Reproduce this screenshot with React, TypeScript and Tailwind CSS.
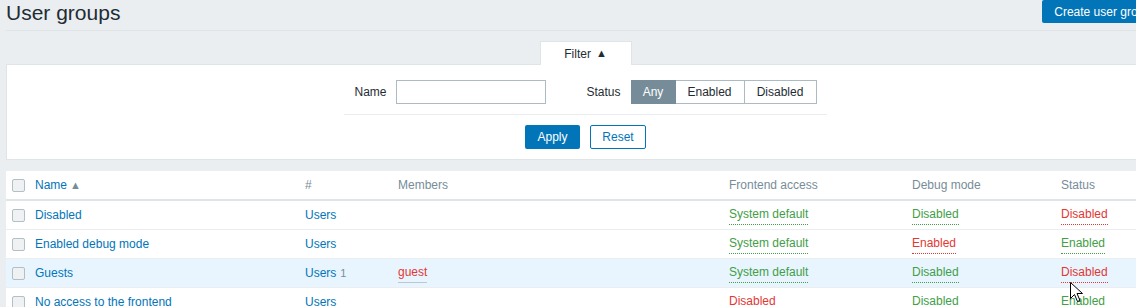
import { ReactNode } from 'react';

const rows = [
  { name: 'Disabled', members: '', count: '', frontend: ['System default', 'green'], debug: ['Disabled', 'green'], status: ['Disabled', 'red'] },
  { name: 'Enabled debug mode', members: '', count: '', frontend: ['System default', 'green'], debug: ['Enabled', 'red'], status: ['Enabled', 'green'] },
  { name: 'Guests', members: 'guest', count: '1', frontend: ['System default', 'green'], debug: ['Disabled', 'green'], status: ['Disabled', 'red'], hover: true },
  { name: 'No access to the frontend', members: '', count: '', frontend: ['Disabled', 'red'], debug: ['Disabled', 'green'], status: ['Enabled', 'green'] },
];

const cols = 'grid grid-cols-[24px_270px_93px_331px_183px_149px_1fr]';

const Checkbox = () => (
  <span className="block w-[13px] h-[13px] rounded-[2px] border border-[#b3bfc7] bg-[#eff1f3]" />
);

const Action = ({ label, tone }: { label: string; tone: string }) => (
  <span
    className={`border-b border-dotted pb-px ${
      tone === 'green' ? 'text-[#429e47] border-[#429e47]' : 'text-[#e33734] border-[#e33734]'
    }`}
  >
    {label}
  </span>
);

const Cell = ({ children, className = '' }: { children?: ReactNode; className?: string }) => (
  <div className={`px-[5px] flex items-center ${className}`}>{children}</div>
);

export default function App() {
  return (
    <div className="w-[1136px] h-[307px] overflow-hidden bg-[#ebeef0] relative font-['Liberation_Sans',Arial,sans-serif] text-[12px] text-[#1f2c33]">
      <div className="w-[1171px] px-[6px]">
        <div className="flex items-start justify-between h-[31px] border-b border-[#dfe4e7]">
          <h1 className="text-[21px] leading-[24px] pt-px text-[#1f2c33]">User groups</h1>
          <button className="h-[23px] px-[12px] mr-[2px] bg-[#0275b8] text-white text-[12px] rounded-[2px] whitespace-nowrap">
            Create user group
          </button>
        </div>

        <div className="flex justify-center mt-[10px]">
          <div className="w-[92px] h-[24px] bg-white border border-b-0 border-[#dfe4e7] flex items-center justify-center gap-[5px] -mb-px relative">
            <span>Filter</span>
            <span className="text-[11px]">▲</span>
          </div>
        </div>

        <div className="bg-white border border-[#dfe4e7] h-[96px] flex flex-col items-center pt-[15px]">
          <div className="flex items-center h-[24px]">
            <span className="mr-[10px]">Name</span>
            <span className="w-[150px] h-[24px] border border-[#acbbc2]" />
            <span className="ml-[40px] mr-[10px]">Status</span>
            <div className="flex h-[24px]">
              <span className="w-[45px] flex items-center justify-center bg-[#768d99] border border-[#768d99] text-white">Any</span>
              <span className="w-[69px] flex items-center justify-center border border-l-0 border-[#acbbc2]">Enabled</span>
              <span className="w-[72px] flex items-center justify-center border border-l-0 border-[#acbbc2]">Disabled</span>
            </div>
          </div>
          <div className="w-[483px] border-t border-[#ebeef0] mt-[10px]" />
          <div className="flex gap-[10px] mt-[10px]">
            <button className="w-[55px] h-[24px] bg-[#0275b8] text-white rounded-[2px]">Apply</button>
            <button className="w-[56px] h-[24px] border border-[#0275b8] text-[#0275b8] rounded-[2px]">Reset</button>
          </div>
        </div>

        <div className="bg-white mt-[11px]">
          <div className={`${cols} h-[30px] border-b-2 border-[#dfe4e7] text-[#768d99]`}>
            <Cell className="pl-[6px] pr-0">
              <Checkbox />
            </Cell>
            <Cell className="text-[#0275b8] gap-[3px]">
              Name <span className="text-[#768d99] text-[11px]">▲</span>
            </Cell>
            <Cell>#</Cell>
            <Cell>Members</Cell>
            <Cell>Frontend access</Cell>
            <Cell>Debug mode</Cell>
            <Cell>Status</Cell>
          </div>
          {rows.map((r) => (
            <div
              key={r.name}
              className={`${cols} h-[29px] border-b border-[#ebeef0] ${r.hover ? 'bg-[#e8f5ff]' : ''}`}
            >
              <Cell className="pl-[6px] pr-0">
                <Checkbox />
              </Cell>
              <Cell className="text-[#0275b8]">{r.name}</Cell>
              <Cell className="text-[#0275b8] gap-[4px]">
                Users {r.count && <span className="text-[#768d99] text-[11px]">{r.count}</span>}
              </Cell>
              <Cell>
                {r.members && (
                  <span className="text-[#e33734] border-b border-[#b9c8d3] pb-px">{r.members}</span>
                )}
              </Cell>
              <Cell>
                <Action label={r.frontend[0]} tone={r.frontend[1]} />
              </Cell>
              <Cell>
                <Action label={r.debug[0]} tone={r.debug[1]} />
              </Cell>
              <Cell>
                <Action label={r.status[0]} tone={r.status[1]} />
              </Cell>
            </div>
          ))}
        </div>
      </div>

      <svg className="absolute left-[1070px] top-[282px]" width="13" height="21" viewBox="0 0 13 21">
        <path d="M0.5 0.5 L0.5 16.5 L4.5 12.5 L7.5 19.5 L10 18.5 L7 11.5 L12.5 11.5 Z" fill="white" stroke="black" strokeWidth="1" />
      </svg>
    </div>
  );
}
